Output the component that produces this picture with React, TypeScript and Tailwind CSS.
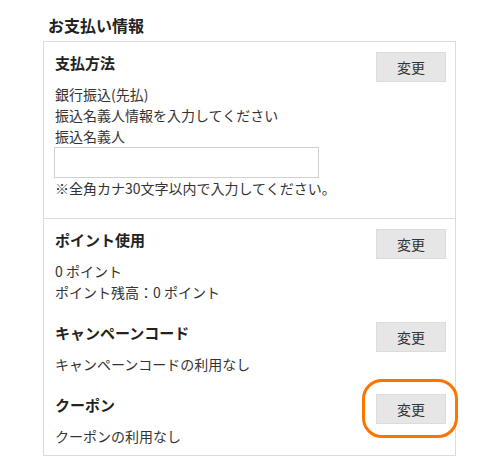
import React from "react";

const font = { fontFamily: '"Noto Sans CJK JP", "Noto Sans", sans-serif' };

function ChangeButton({ highlight = false }: { highlight?: boolean }) {
  return (
    <div className="relative shrink-0">
      <button className="w-[70px] h-[30px] bg-[#e6e6e6] border border-[#dcdcdc] text-[14px] leading-none text-[#333]">
        変更
      </button>
      {highlight && (
        <span className="absolute -left-[14px] -top-[15px] w-[96px] h-[59px] rounded-[20px] border-[3px] border-[#ff7300] pointer-events-none"></span>
      )}
    </div>
  );
}

function Row({
  title,
  lines,
  highlight,
  children,
}: {
  title: string;
  lines: string[];
  highlight?: boolean;
  children?: React.ReactNode;
}) {
  return (
    <div className="flex justify-between">
      <div>
        <h4 className="text-[15px] font-bold leading-[22px] text-[#222]">{title}</h4>
        <div className="mt-[10px]">
          {lines.map((l) => (
            <p key={l} className="leading-[21px]">
              {l}
            </p>
          ))}
          {children}
        </div>
      </div>
      <ChangeButton highlight={highlight} />
    </div>
  );
}

export default function App() {
  return (
    <div className="bg-white w-[500px] h-[470px] text-[14px] text-[#333]" style={font}>
      <div className="ml-[43px] w-[413px] pt-[14px]">
        <h3 className="pl-[5px] text-[16px] font-bold leading-[22px] text-[#222] mb-[5px]">お支払い情報</h3>

        <div className="border border-[#dcdcdc]">
          {/* 支払方法 */}
          <div className="pl-[11px] pr-[9px] pt-[10px] pb-[19px] border-b border-[#dcdcdc]">
            <Row
              title="支払方法"
              lines={["銀行振込(先払)", "振込名義人情報を入力してください", "振込名義人"]}
            >
              <input
                type="text"
                className="block w-[265px] h-[31px] -ml-px border border-[#d0d0d0] bg-white outline-none"
              />
              <p className="leading-[21px]">※全角カナ30文字以内で入力してください。</p>
            </Row>
          </div>

          {/* ポイント・キャンペーン・クーポン */}
          <div className="pl-[11px] pr-[9px] pt-[10px] pb-[8px] flex flex-col gap-[19px]">
            <Row title="ポイント使用" lines={["0 ポイント", "ポイント残高：0 ポイント"]} />
            <Row title="キャンペーンコード" lines={["キャンペーンコードの利用なし"]} />
            <Row title="クーポン" lines={["クーポンの利用なし"]} highlight />
          </div>
        </div>
      </div>
    </div>
  );
}
